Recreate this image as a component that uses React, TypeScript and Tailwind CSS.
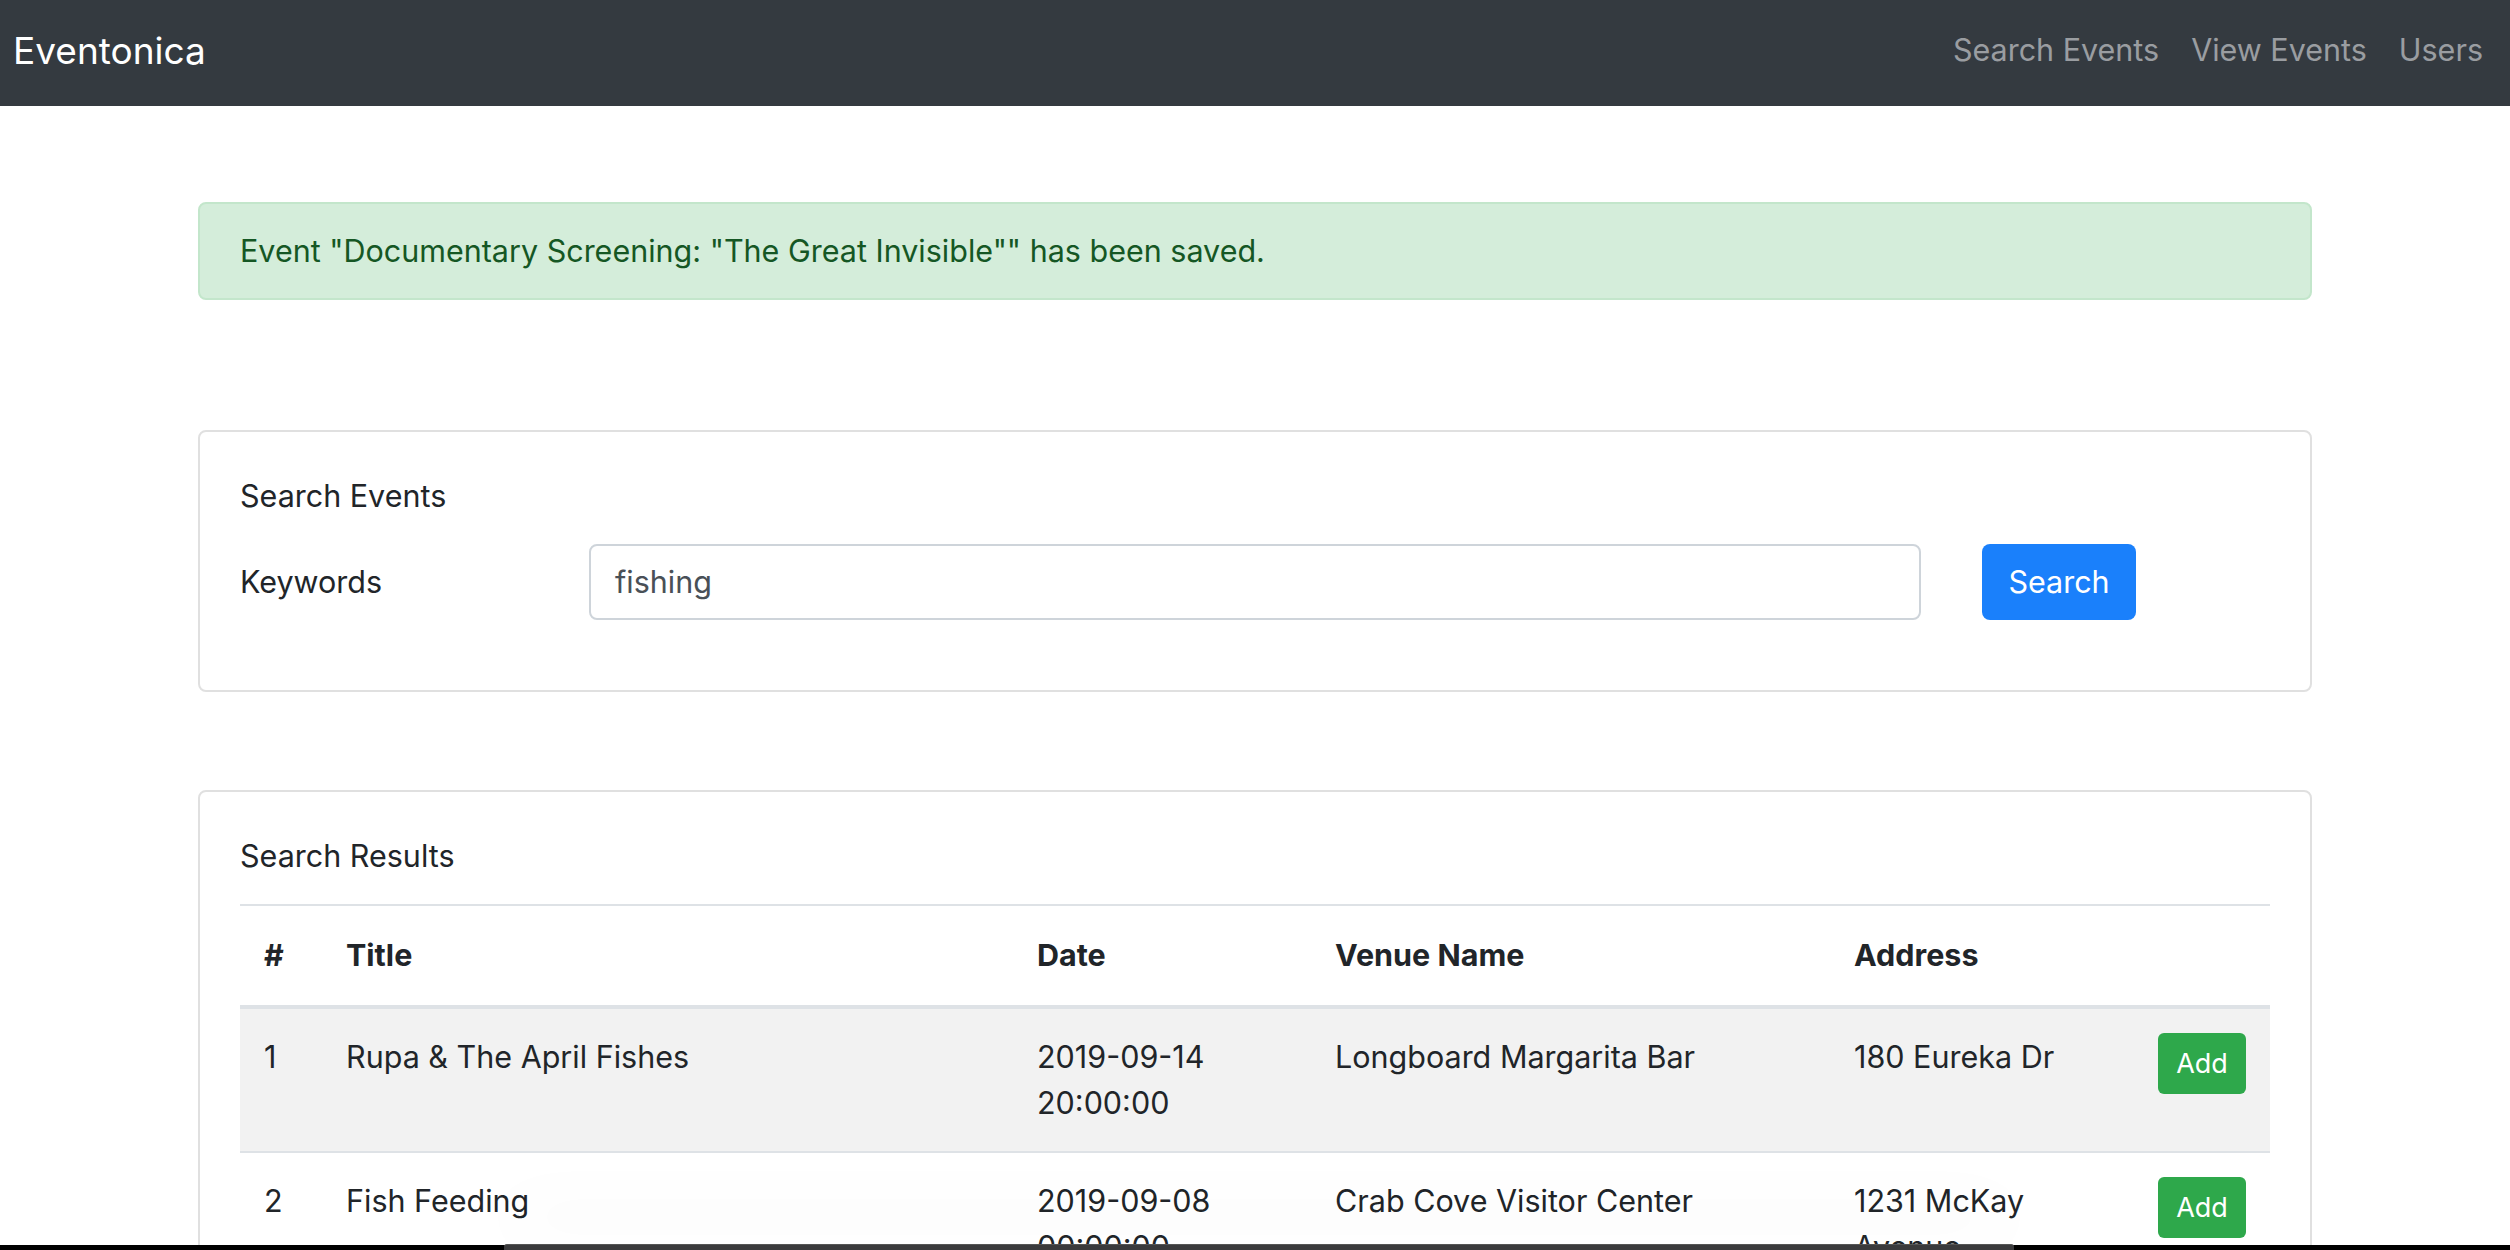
import React from "react";

const rows = [
  {
    n: 1,
    title: "Rupa & The April Fishes",
    date: ["2019-09-14", "20:00:00"],
    venue: "Longboard Margarita Bar",
    address: ["180 Eureka Dr"],
  },
  {
    n: 2,
    title: "Fish Feeding",
    date: ["2019-09-08", "00:00:00"],
    venue: "Crab Cove Visitor Center",
    address: ["1231 McKay", "Avenue"],
  },
  {
    n: 3,
    title: "Fishing Derby",
    date: ["2019-09-21", "09:00:00"],
    venue: "Lake Merritt",
    address: ["568 Bellevue", "Ave"],
  },
];

export default function App() {
  return (
    <div className="min-h-[1250px] bg-white font-[Inter,sans-serif] text-[#212529]">
      <nav className="flex h-[106px] items-center justify-between bg-[#343a40] pb-[5px] pl-[13px] pr-[27px]">
        <span className="text-[37px] leading-none text-white">Eventonica</span>
        <div className="flex gap-[32px] text-[30.5px] leading-none text-[#9a9da1]">
          <span>Search Events</span>
          <span>View Events</span>
          <span>Users</span>
        </div>
      </nav>

      <div className="mx-auto w-[2114px]">
        <div className="mt-[96px] rounded-[8px] border-2 border-[#c3e6cb] bg-[#d4edda] px-[40px] py-[24px] text-[30.5px] leading-[46px] text-[#155724]">
          Event "Documentary Screening: "The Great Invisible"" has been saved.
        </div>

        <div className="mt-[130px] rounded-[8px] border-2 border-[#e0e0e0] px-[40px] pt-[41px] pb-[70px]">
          <div className="text-[30.5px] leading-[46px]">Search Events</div>
          <div className="mt-[25px] flex items-center">
            <div className="w-[349px] text-[30.5px] leading-[46px]">Keywords</div>
            <div className="flex h-[76px] w-[1332px] items-center rounded-[8px] border-2 border-[#ced4da] px-[24px] text-[30.5px] text-[#495057]">
              fishing
            </div>
            <div className="ml-[61px] flex h-[76px] w-[154px] items-center justify-center rounded-[8px] bg-[#1a80fb] text-[30.5px] text-white">
              Search
            </div>
          </div>
        </div>

        <div className="mt-[98px] rounded-[8px] border-2 border-[#e0e0e0] px-[40px] pt-[41px] pb-[40px]">
          <div className="text-[30.5px] leading-[46px]">Search Results</div>
          <table className="mt-[25px] w-[2030px] table-fixed border-collapse text-[30.5px] leading-[46px]">
            <colgroup>
              <col className="w-[82px]" />
              <col className="w-[691px]" />
              <col className="w-[298px]" />
              <col className="w-[519px]" />
              <col className="w-[304px]" />
              <col className="w-[136px]" />
            </colgroup>
            <thead>
              <tr className="border-t-2 border-b-4 border-[#dee2e6]">
                <th className="px-[24px] pt-[26px] pb-[27px] text-left font-bold">#</th>
                <th className="px-[24px] pt-[26px] pb-[27px] text-left font-bold">Title</th>
                <th className="px-[24px] pt-[26px] pb-[27px] text-left font-bold">Date</th>
                <th className="px-[24px] pt-[26px] pb-[27px] text-left font-bold">Venue Name</th>
                <th className="px-[24px] pt-[26px] pb-[27px] text-left font-bold">Address</th>
                <th className="px-[24px] pt-[26px] pb-[27px]"></th>
              </tr>
            </thead>
            <tbody>
              {rows.map((r, i) => (
                <tr
                  key={r.n}
                  className={
                    i % 2 === 0
                      ? "border-t-2 border-[#dee2e6] bg-[#f2f2f2] align-top"
                      : "border-t-2 border-[#dee2e6] bg-white align-top"
                  }
                >
                  <td className="px-[24px] py-[25px]">{r.n}</td>
                  <td className="px-[24px] py-[25px]">{r.title}</td>
                  <td className="px-[24px] py-[25px]">
                    {r.date.map((d) => (
                      <div key={d}>{d}</div>
                    ))}
                  </td>
                  <td className="px-[24px] py-[25px]">{r.venue}</td>
                  <td className="px-[24px] py-[25px]">
                    {r.address.map((d) => (
                      <div key={d}>{d}</div>
                    ))}
                  </td>
                  <td className="px-[24px] pt-[24px]">
                    <div className="flex h-[61px] w-[88px] items-center justify-center rounded-[6px] bg-[#2ea84b] text-[27px] leading-none text-white">
                      Add
                    </div>
                  </td>
                </tr>
              ))}
            </tbody>
          </table>
        </div>
      </div>

      <div className="fixed bottom-0 left-0 h-[5px] w-full bg-black">
        <div className="absolute bottom-0 left-[504px] h-[6px] w-[1510px] rounded-t-[3px] border-t border-[#555] bg-[#3a3a3c] shadow-[0_-30px_70px_rgba(0,0,0,0.12)]"></div>
      </div>
    </div>
  );
}
